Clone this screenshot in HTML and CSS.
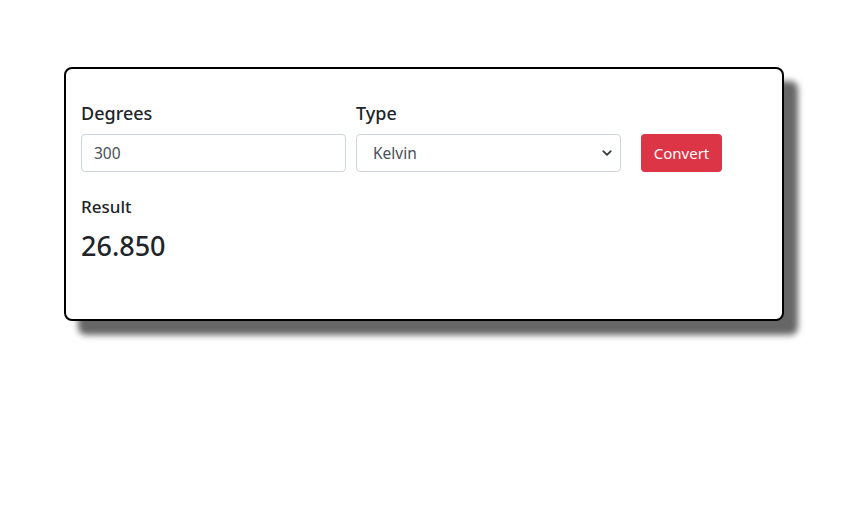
FILE: index.html
```html
<!DOCTYPE html>
<html>
<head>
<meta charset="utf-8">
<link rel="stylesheet" href="styles.css">
</head>
<body>
<div class="card">
  <div class="row">
    <div class="field">
      <label class="label">Degrees</label>
      <input class="input" type="text" value="300">
    </div>
    <div class="field">
      <label class="label">Type</label>
      <div class="select">
        <span>Kelvin</span>
        <svg class="chev" width="10" height="10" viewBox="0 0 16 16"><path d="M2 5l6 6 6-6" fill="none" stroke="#343a40" stroke-width="2.8" stroke-linecap="round" stroke-linejoin="round"/></svg>
      </div>
    </div>
    <button class="btn">Convert</button>
  </div>
  <div class="result-label">Result</div>
  <div class="result">26.850</div>
</div>
</body>
</html>
```
FILE: styles.css
```css
* { box-sizing: border-box; }
html, body { min-height: 100%; }
body {
  margin: 0;
  padding: 67px 0 60px;
  background: #fff;
  font-family: "Noto Sans", "Open Sans", sans-serif;
  color: #212529;
}
.card {
  width: 720px;
  height: 254px;
  margin: 0 auto;
  border: 2px solid #000;
  border-radius: 8px;
  box-shadow: 14px 14px 6px #666;
  padding: 32px 15px 0;
  background: #fff;
}
.row {
  display: flex;
  align-items: flex-end;
  gap: 10px;
}
.field {
  display: flex;
  flex-direction: column;
  width: 265px;
}
.label {
  font-size: 18px;
  font-weight: 500;
  line-height: 24px;
  margin-bottom: 9px;
}
.input, .select {
  height: 38px;
  border: 1px solid #ced4da;
  border-radius: 4px;
  font-family: inherit;
  font-size: 15.5px;
  color: #495057;
  padding: 0 12px;
  background: #fff;
}
.select {
  display: flex;
  align-items: center;
  justify-content: space-between;
  padding: 0 8px 0 16px;
}
.chev { display: block; }
.btn {
  margin-left: 10px;
  height: 38px;
  width: 81px;
  border: none;
  border-radius: 4px;
  background: #dc3545;
  color: #fff;
  font-family: inherit;
  font-size: 15px;
  padding: 0;
}
.result-label {
  margin-top: 23px;
  font-size: 17px;
  font-weight: 500;
  line-height: 24px;
}
.result {
  margin-top: 11px;
  font-size: 27px;
  font-weight: 500;
  line-height: 32px;
}
```
